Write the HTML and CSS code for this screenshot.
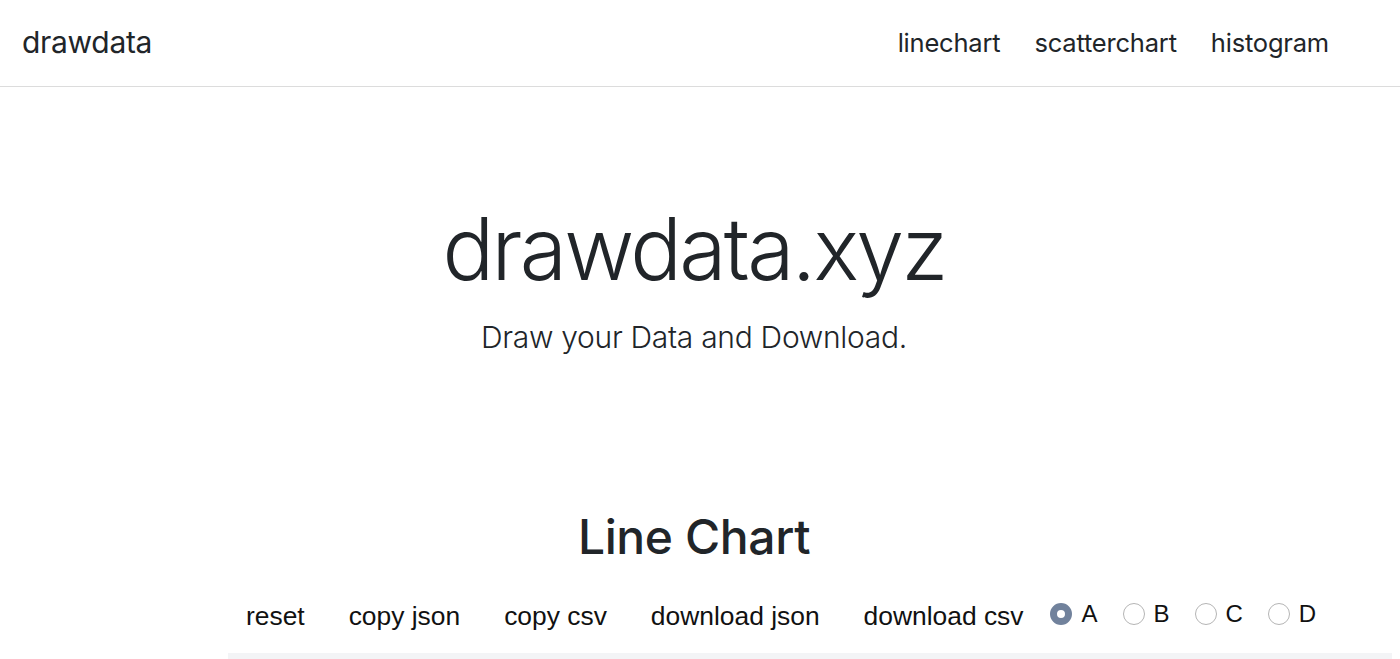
FILE: index.html
```html
<!DOCTYPE html>
<html>
<head>
<meta charset="utf-8">
<link rel="stylesheet" href="styles.css">
</head>
<body>
<nav class="navbar">
  <a class="brand" href="#">drawdata</a>
  <div class="nav-links">
    <a href="#">linechart</a>
    <a href="#">scatterchart</a>
    <a href="#">histogram</a>
  </div>
</nav>
<main class="page">
  <section class="hero">
    <h1 class="display">drawdata.xyz</h1>
    <p class="lead">Draw your Data and Download.</p>
  </section>
  <section class="chart-section">
    <h2 class="chart-title">Line Chart</h2>
    <div class="toolbar">
      <button class="btn">reset</button>
      <button class="btn">copy json</button>
      <button class="btn">copy csv</button>
      <button class="btn">download json</button>
      <button class="btn">download csv</button>
      <div class="radios">
        <label class="radio"><span class="dot checked"></span>A</label>
        <label class="radio"><span class="dot"></span>B</label>
        <label class="radio"><span class="dot"></span>C</label>
        <label class="radio"><span class="dot"></span>D</label>
      </div>
    </div>
    <div class="canvas"></div>
  </section>
</main>
</body>
</html>
```
FILE: styles.css
```css
* { box-sizing: border-box; }
html, body { margin: 0; padding: 0; background: #fff; }
body {
  font-family: Inter, "Noto Sans", sans-serif;
  color: #212529;
  overflow: hidden;
}
a { color: #212529; text-decoration: none; }

.navbar {
  height: 87px;
  border-bottom: 1px solid #dcdcdc;
  display: flex;
  align-items: center;
  justify-content: space-between;
  padding: 0 71px 0 22px;
}
.brand { font-size: 30px; letter-spacing: -0.3px; padding-bottom: 2px; }
.nav-links { display: flex; gap: 34px; }
.nav-links a { font-size: 25.5px; letter-spacing: -0.2px; padding-bottom: 2px; }

.page { width: 1388px; }

.hero { text-align: center; padding-top: 111px; }
.display {
  margin: 0;
  font-size: 86px;
  font-weight: 300;
  line-height: 1.2;
  letter-spacing: -2.7px;
}
.lead {
  margin: 17px 0 0;
  font-size: 30px;
  font-weight: 300;
  line-height: 1.3;
  letter-spacing: -0.3px;
}

.chart-section { padding-top: 151px; }
.chart-title {
  margin: 0;
  text-align: center;
  font-size: 48px;
  font-weight: 500;
  line-height: 1.2;
  letter-spacing: -0.4px;
}
.toolbar {
  display: flex;
  align-items: center;
  margin: 29px 0 0 228px;
}
.btn {
  font-family: "Liberation Sans", Arial, sans-serif;
  font-size: 26.4px;
  color: #111;
  background: none;
  border: 0;
  padding: 6px 22px 6px 18px;
  margin: 0;
}
.btn + .btn { padding-left: 22px; }
.radios { display: flex; gap: 25px; margin-left: 5px; }
.radio {
  display: flex;
  align-items: center;
  gap: 9px;
  font-family: "Liberation Sans", Arial, sans-serif;
  font-size: 24px;
  color: #111;
  position: relative;
  top: -2px;
}
.dot {
  width: 22px; height: 22px;
  border-radius: 50%;
  border: 1px solid #b5b5b5;
  background: #fff;
  display: inline-block;
}
.dot.checked {
  border: 7.5px solid #71829c;
  background: #fff;
}
.canvas {
  margin: 15px 0 0 228px;
  width: 1164px;
  height: 300px;
  background: #f3f4f6;
}
```
